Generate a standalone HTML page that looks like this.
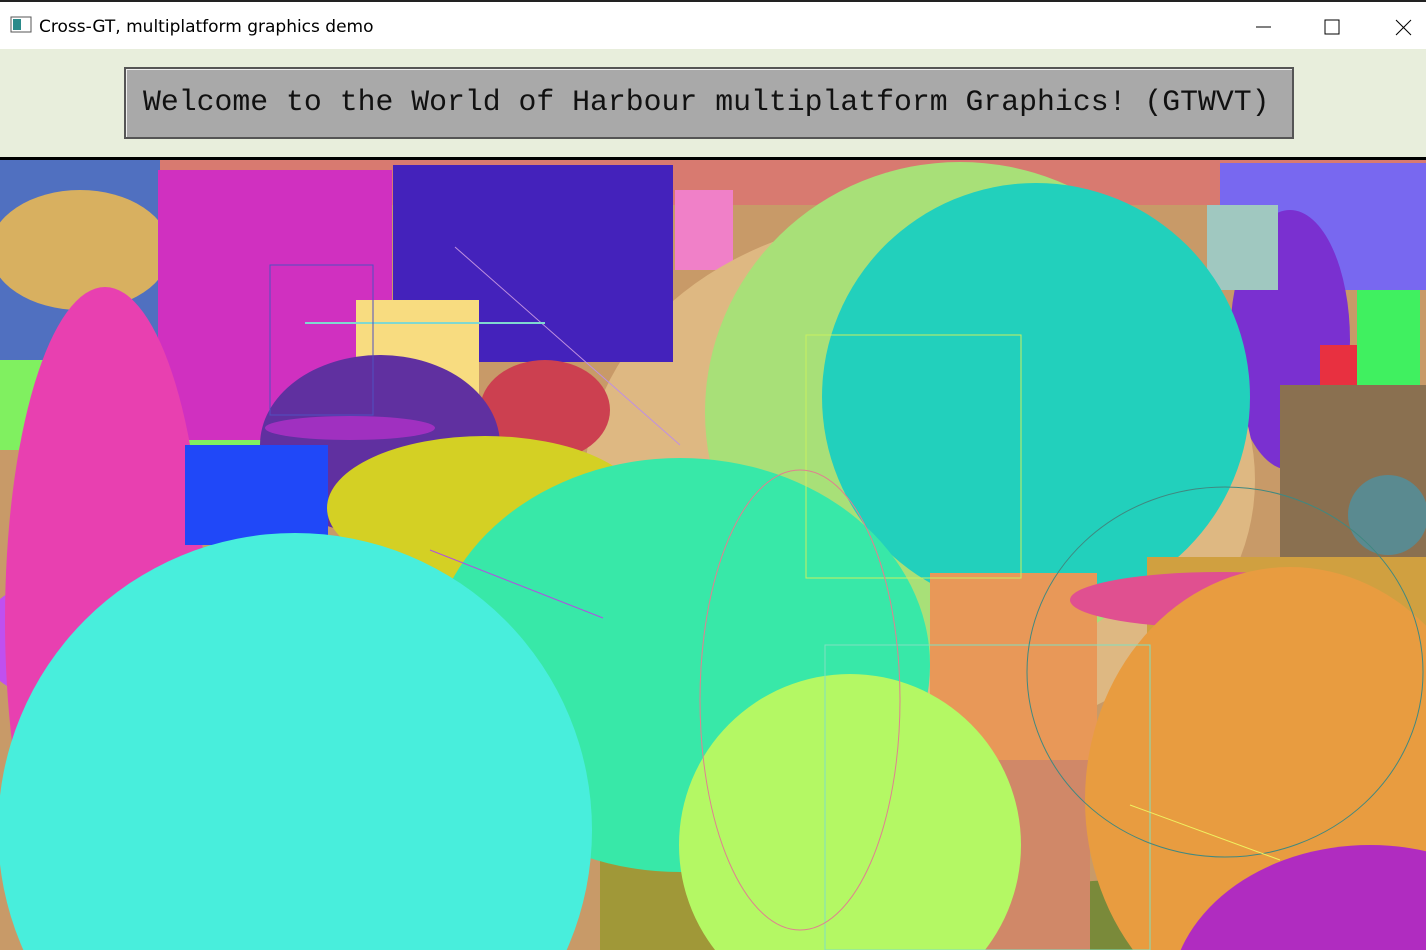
<!DOCTYPE html>
<html><head><meta charset="utf-8"><style>
html,body{margin:0;padding:0;width:1426px;height:950px;overflow:hidden;background:#fff;font-family:"Liberation Sans",sans-serif;position:relative}
.title{position:absolute;left:0;top:0;width:1426px;height:49px;background:#fff;border-top:2px solid #222;box-sizing:border-box}
.title span{position:absolute;left:39px;top:15px;font-size:17px;color:#000;font-family:"DejaVu Sans","Liberation Sans",sans-serif}
.hdr{position:absolute;left:0;top:49px;width:1426px;height:108px;background:#e8eedc}
.box{position:absolute;left:124px;top:67px;width:1166px;height:68px;background:#a9a9a9;border:2px solid #555;box-shadow:inset 1px 1px 0 #eee}
.box span{position:absolute;left:17px;top:16px;font-family:"Liberation Mono",monospace;font-size:29.8px;color:#111;white-space:nowrap}
svg{position:absolute;display:block}
#g{left:0;top:157px}
</style></head><body>
<div class="title">
<svg style="top:14px;left:10px" width="22" height="18"><rect x="1" y="1" width="20" height="15" fill="#fff" stroke="#555"/><rect x="3" y="3" width="8" height="11" fill="#2a8a8a"/></svg>
<span>Cross-GT, multiplatform graphics demo</span>
<svg style="top:16px;left:1256px" width="160" height="20"><line x1="0" y1="9" x2="15" y2="9" stroke="#000"/><rect x="69" y="2" width="14" height="14" fill="none" stroke="#000"/><line x1="140" y1="2" x2="155" y2="17" stroke="#000"/><line x1="155" y1="2" x2="140" y2="17" stroke="#000"/></svg>
</div>
<div class="hdr"></div>
<div class="box"><span>Welcome to the World of Harbour multiplatform Graphics! (GTWVT)</span></div>
<svg id="g" width="1426" height="793" viewBox="0 157 1426 793">
<rect x="0" y="157" width="1426" height="3" fill="#000"/>
<rect x="0" y="160" width="1426" height="790" fill="#c89a68"/>
<rect x="0" y="160" width="1426" height="45" fill="#d87a70"/>
<rect x="0" y="160" width="160" height="200" fill="#5070c0"/>
<ellipse cx="80" cy="250" rx="90" ry="60" fill="#d8b060"/>
<rect x="0" y="360" width="300" height="90" fill="#80f060"/>
<rect x="1220" y="163" width="206" height="127" fill="#7868f0"/>
<ellipse cx="1290" cy="340" rx="60" ry="130" fill="#7a30d0"/>
<rect x="1280" y="385" width="146" height="172" fill="#8a7050"/>
<rect x="1207" y="205" width="71" height="85" fill="#a0c8c0"/>
<rect x="1357" y="290" width="63" height="95" fill="#40f060"/>
<rect x="1320" y="345" width="37" height="40" fill="#e83040"/>
<circle cx="1388" cy="515" r="40" fill="#5a8a90"/>
<rect x="675" y="190" width="58" height="80" fill="#f080c8"/>
<ellipse cx="920" cy="480" rx="335" ry="265" fill="#deb882"/>
<ellipse cx="960" cy="412" rx="255" ry="250" fill="#a8e078"/>
<circle cx="1036" cy="397" r="214" fill="#22d0bc"/>
<rect x="158" y="170" width="234" height="270" fill="#d030c0"/>
<rect x="393" y="165" width="280" height="197" fill="#4422bb"/>
<ellipse cx="545" cy="410" rx="65" ry="50" fill="#cc4050"/>
<rect x="356" y="300" width="123" height="120" fill="#f8dc80"/>
<ellipse cx="380" cy="445" rx="120" ry="90" fill="#6030a0"/>
<ellipse cx="350" cy="428" rx="85" ry="12" fill="#a030c0"/>
<ellipse cx="120" cy="620" rx="110" ry="100" fill="#30c850"/>
<ellipse cx="40" cy="640" rx="60" ry="55" fill="#c050f0"/>
<ellipse cx="105" cy="620" rx="100" ry="333" fill="#e840b0"/>
<rect x="185" y="445" width="143" height="100" fill="#2048f8"/>
<ellipse cx="485" cy="508" rx="158" ry="72" fill="#d4d024"/>
<rect x="1147" y="557" width="279" height="143" fill="#d0a040"/>
<rect x="600" y="860" width="130" height="90" fill="#a09838"/>
<ellipse cx="1120" cy="930" rx="140" ry="50" fill="#7a8a3a"/>
<ellipse cx="680" cy="665" rx="250" ry="207" fill="#38e8a8"/>
<rect x="930" y="573" width="167" height="187" fill="#e89858"/>
<rect x="930" y="760" width="160" height="190" fill="#d08868"/>
<ellipse cx="1220" cy="600" rx="150" ry="28" fill="#e05090"/>
<ellipse cx="1290" cy="800" rx="205" ry="233" fill="#e89c40"/>
<ellipse cx="1370" cy="1000" rx="200" ry="155" fill="#b02cc0"/>
<circle cx="295" cy="830" r="297" fill="#48eedc"/>
<circle cx="850" cy="845" r="171" fill="#b4f864"/>
<g fill="none" stroke-width="1">
<rect x="806" y="335" width="215" height="243" stroke="#c8f060"/>
<rect x="825" y="645" width="325" height="305" stroke="#80e0c0"/>
<ellipse cx="1225" cy="672" rx="198" ry="185" stroke="#408880"/>
<ellipse cx="800" cy="700" rx="100" ry="230" stroke="#e08090"/>
<line x1="455" y1="247" x2="680" y2="445" stroke="#c090e0"/>
<line x1="305" y1="323" x2="545" y2="323" stroke="#80d8d0" stroke-width="2"/>
<line x1="430" y1="550" x2="603" y2="618" stroke="#b050e0"/>
<line x1="1130" y1="805" x2="1280" y2="860" stroke="#f0f060"/>
<rect x="270" y="265" width="103" height="150" stroke="#5050c0"/>
</g>
</svg>
</body></html>
